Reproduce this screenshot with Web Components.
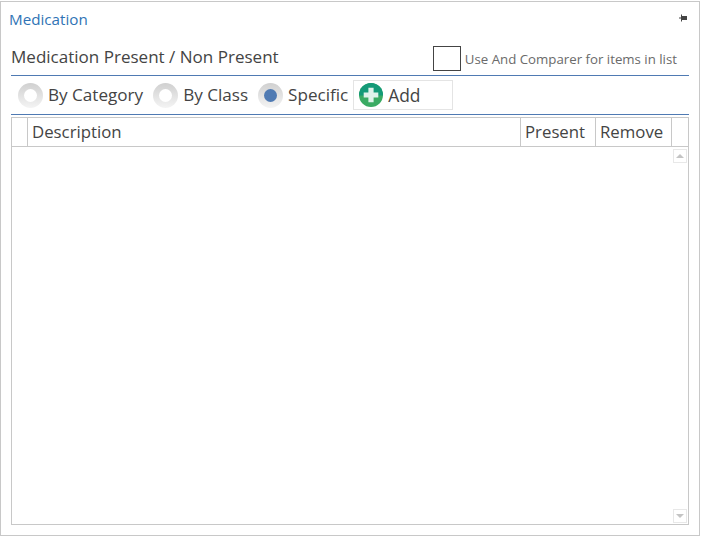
<!DOCTYPE html>
<html>
<head>
<meta charset="utf-8">
<style>
  html, body { margin: 0; background: #fff; }
  body { font-family: "Open Sans", "Noto Sans", sans-serif; color: #444; }
</style>
</head>
<body>
<med-panel heading="Medication">
  <med-filter heading="Medication Present / Non Present" comparer="Use And Comparer for items in list"></med-filter>
  <med-toolbar>
    <med-radio>By Category</med-radio>
    <med-radio>By Class</med-radio>
    <med-radio checked>Specific</med-radio>
    <med-add>Add</med-add>
  </med-toolbar>
  <med-grid></med-grid>
</med-panel>

<script>
class MedPanel extends HTMLElement {
  constructor() {
    super();
    this.attachShadow({ mode: "open" });
  }
  connectedCallback() {
    this.shadowRoot.innerHTML = `
    <style>
      :host {
        display: flex;
        flex-direction: column;
        box-sizing: border-box;
        width: 700px;
        height: 535px;
        margin-top: 1px;
        padding: 0 10px 10px 10px;
        border: 1px solid #c8c8c8;
      }
      .title {
        display: flex;
        justify-content: space-between;
        align-items: center;
        height: 35px;
        margin-left: -2px;
        font-size: 15.200px;
        color: #2f73b5;
      }
      .title span { margin-bottom: 2px; }
      svg { margin: 0 1px 3px 0; }
    </style>
    <div class="title">
      <span>${this.getAttribute("heading")}</span>
      <svg width="9" height="8" viewBox="0 0 9 8"><path d="M0 4h3M2.500 0.500v7" stroke="#444" fill="none"/><rect x="3" y="2" width="5" height="4" fill="#444"/></svg>
    </div>
    <slot></slot>`;
  }
}

class MedFilter extends HTMLElement {
  constructor() {
    super();
    this.attachShadow({ mode: "open" });
  }
  connectedCallback() {
    this.shadowRoot.innerHTML = `
    <style>
      :host {
        display: flex;
        justify-content: space-between;
        align-items: center;
        box-sizing: border-box;
        height: 39px;
        padding: 0 12px 0 0;
        border-bottom: 1px solid #4f7ab3;
      }
      .head { font-size: 17.050px; color: #444; }
      .cmp { display: flex; align-items: center; gap: 4px; margin-top: 4px; font-size: 13.250px; color: #6a6a6a; }
      .cmp em { font-style: normal; margin-top: 2px; }
      .box { width: 26px; height: 23px; border: 1px solid #444; }
    </style>
    <span class="head">${this.getAttribute("heading")}</span>
    <span class="cmp"><span class="box"></span><em>${this.getAttribute("comparer")}</em></span>`;
  }
}

class MedToolbar extends HTMLElement {
  constructor() {
    super();
    this.attachShadow({ mode: "open" });
  }
  connectedCallback() {
    this.shadowRoot.innerHTML = `
    <style>
      :host {
        display: flex;
        align-items: center;
        gap: 10px;
        box-sizing: border-box;
        height: 39px;
        padding: 0 0 0 7px;
        border-bottom: 1px solid #4f7ab3;
      }
    </style>
    <slot></slot>`;
  }
}

class MedRadio extends HTMLElement {
  constructor() {
    super();
    this.attachShadow({ mode: "open" });
  }
  connectedCallback() {
    const dot = this.hasAttribute("checked") ? "#4f7ab3" : "#fff";
    this.shadowRoot.innerHTML = `
    <style>
      :host {
        display: flex;
        align-items: center;
        gap: 5px;
        font-size: 17.100px;
        color: #444;
      }
      .ring {
        display: flex;
        align-items: center;
        justify-content: center;
        width: 25px;
        height: 25px;
        border-radius: 50%;
        background: linear-gradient(#d0d0d0, #f4f4f4);
      }
      .dot {
        width: 13px;
        height: 13px;
        border-radius: 50%;
        background: ${dot};
      }
      .label { margin-bottom: 1px; }
    </style>
    <span class="ring"><span class="dot"></span></span>
    <span class="label"><slot></slot></span>`;
  }
}

class MedAdd extends HTMLElement {
  constructor() {
    super();
    this.attachShadow({ mode: "open" });
  }
  connectedCallback() {
    this.shadowRoot.innerHTML = `
    <style>
      :host {
        display: flex;
        align-items: center;
        gap: 5px;
        box-sizing: border-box;
        width: 100px;
        height: 30px;
        margin-left: -5px;
        padding-left: 5px;
        border: 1px solid #e4e4e4;
        font-size: 17.400px;
        color: #444;
      }
    </style>
    <svg width="24" height="24" viewBox="0 0 23 23">
      <defs><clipPath id="top"><rect width="23" height="12"/></clipPath></defs>
      <circle cx="11.500" cy="11.500" r="11.500" fill="#3aab63"/>
      <circle cx="11.500" cy="11.500" r="11.500" fill="#149a78" clip-path="url(#top)"/>
      <path d="M9 4.500h5V9h4.500v5H14v4.500H9V14H4.500V9H9z" fill="#dff2ea"/>
    </svg>
    <span class="label"><slot></slot></span>`;
  }
}

class MedGrid extends HTMLElement {
  constructor() {
    super();
    this.attachShadow({ mode: "open" });
  }
  connectedCallback() {
    this.shadowRoot.innerHTML = `
    <style>
      :host {
        display: flex;
        flex-direction: column;
        flex: 1;
        box-sizing: border-box;
        margin-top: 2px;
        border: 1px solid #c8c8c8;
        font-size: 16.800px;
        color: #444;
      }
      .head {
        display: grid;
        grid-template-columns: 15px 1fr 75px 76px 17px;
        height: 28px;
        border-bottom: 1px solid #c8c8c8;
      }
      .head span {
        display: flex;
        align-items: center;
        padding: 0 0 1px 4px;
        border-left: 1px solid #c8c8c8;
      }
      .head span:first-child { border-left: 0; }
      .body {
        flex: 1;
        display: flex;
        flex-direction: column;
        justify-content: space-between;
        align-items: flex-end;
        padding: 2px 1px 1px 0;
      }
      .arrow {
        display: flex;
        align-items: center;
        justify-content: center;
        width: 14px;
        height: 14px;
        box-sizing: border-box;
        border: 1px solid #e8e8e8;
      }
      .arrow i {
        width: 0;
        height: 0;
        border-left: 4px solid transparent;
        border-right: 4px solid transparent;
      }
      .up i { border-bottom: 4px solid #c4c4c4; }
      .down i { border-top: 4px solid #c4c4c4; }
    </style>
    <div class="head">
      <span></span><span>Description</span><span>Present</span><span>Remove</span><span></span>
    </div>
    <div class="body">
      <div class="arrow up"><i></i></div>
      <div class="arrow down"><i></i></div>
    </div>`;
  }
}

customElements.define("med-panel", MedPanel);
customElements.define("med-filter", MedFilter);
customElements.define("med-toolbar", MedToolbar);
customElements.define("med-radio", MedRadio);
customElements.define("med-add", MedAdd);
customElements.define("med-grid", MedGrid);
</script>
</body>
</html>
